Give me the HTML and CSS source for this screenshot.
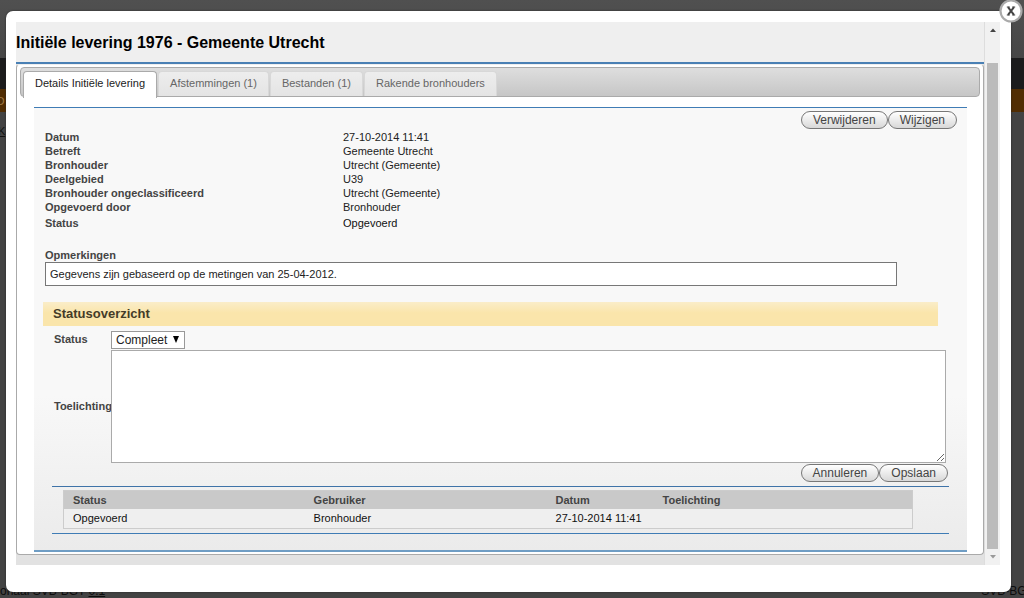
FILE: index.html
```html
<!DOCTYPE html>
<html lang="nl">
<head>
<meta charset="utf-8">
<title>Initiële levering 1976 - Gemeente Utrecht</title>
<link rel="stylesheet" href="styles.css">
</head>
<body>
<div class="backdrop">
  <div class="site-bar"></div>
  <div class="site-menu">O</div>
  <div class="site-crumb">K</div>
  <div class="site-footer"><span>onaal SVB-BGT <u>0.1</u></span><span>SVB-BGT</span></div>
</div>
<div class="modal">
  <button class="close" type="button" aria-label="Sluiten">
    <svg width="24" height="24" viewBox="0 0 24 24">
      <circle cx="12" cy="12" r="10.5" fill="#fff" stroke="#aaa" stroke-width="2.2"/>
      <path d="M9 8.2 L15 15.8 M15 8.2 L9 15.8" stroke="#444" stroke-width="2" fill="none"/>
      <path d="M7.8 8h3M13.2 8h3M7.8 16h3M13.2 16h3" stroke="#444" stroke-width="1"/>
    </svg>
  </button>
  <div class="frame">
    <main class="content">
      <h1>Initiële levering 1976 - Gemeente Utrecht</h1>
      <section class="tabs">
        <nav class="tab-bar">
          <button type="button" class="tab active">Details Initiële levering</button>
          <button type="button" class="tab">Afstemmingen (1)</button>
          <button type="button" class="tab">Bestanden (1)</button>
          <button type="button" class="tab">Rakende bronhouders</button>
        </nav>
        <div class="panel">
          <div class="actions top">
            <button type="button" class="pill">Verwijderen</button><button type="button" class="pill">Wijzigen</button>
          </div>
          <dl class="details">
            <dt>Datum</dt><dd>27-10-2014 11:41</dd>
            <dt>Betreft</dt><dd>Gemeente Utrecht</dd>
            <dt>Bronhouder</dt><dd>Utrecht (Gemeente)</dd>
            <dt>Deelgebied</dt><dd>U39</dd>
            <dt>Bronhouder ongeclassificeerd</dt><dd>Utrecht (Gemeente)</dd>
            <dt>Opgevoerd door</dt><dd>Bronhouder</dd>
            <dt class="last">Status</dt><dd class="last">Opgevoerd</dd>
          </dl>
          <div class="remarks">
            <label for="remarks">Opmerkingen</label>
            <input id="remarks" type="text" value="Gegevens zijn gebaseerd op de metingen van 25-04-2012." readonly>
          </div>
          <h2>Statusoverzicht</h2>
          <form class="status-form">
            <label for="status">Status</label>
            <div class="select-wrap">
              <select id="status"><option>Compleet</option></select>
              <svg width="6" height="7" viewBox="0 0 6 7"><path d="M0 0h6L3 7z"/></svg>
            </div>
            <label for="note">Toelichting</label>
            <textarea id="note"></textarea>
          </form>
          <div class="actions bottom">
            <button type="button" class="pill">Annuleren</button><button type="button" class="pill">Opslaan</button>
          </div>
          <div class="history">
            <table>
              <colgroup><col class="c-status"><col class="c-user"><col class="c-date"><col></colgroup>
              <thead><tr><th>Status</th><th>Gebruiker</th><th>Datum</th><th>Toelichting</th></tr></thead>
              <tbody><tr><td>Opgevoerd</td><td>Bronhouder</td><td>27-10-2014 11:41</td><td></td></tr></tbody>
            </table>
          </div>
        </div>
      </section>
    </main>
    <div class="scroll">
      <svg width="8" height="4" viewBox="0 0 8 4"><path d="M1 4L4 0.5L7 4z" fill="#444"/></svg>
      <div class="thumb"></div>
      <svg width="8" height="4" viewBox="0 0 8 4"><path d="M1 0L4 3.5L7 0z" fill="#999"/></svg>
    </div>
  </div>
</div>
</body>
</html>
```
FILE: styles.css
```css
* { box-sizing: border-box; }
body {
  margin: 0;
  min-height: 100vh;
  padding: 11px 13px 6px 6px;
  display: flex;
  background: #434343;
  font: 11px/14px "Liberation Sans", Arial, sans-serif;
  color: #222;
  overflow: hidden;
}
button, input, select, textarea { font: inherit; color: inherit; margin: 0; }

.backdrop { position: absolute; inset: 0; padding-top: 58px; display: flex; flex-direction: column; background: linear-gradient(#505050, #464646 60px, #434343 120px); overflow: hidden; }
.site-bar { height: 31px; background: #1b1b1c; }
.site-menu { height: 23px; background: #512d03; color: #a07a45; line-height: 24px; text-indent: -4px; }
.site-crumb { padding-top: 12px; text-decoration: underline; color: #111; text-indent: -2px; }
.site-footer { margin-top: auto; height: 14px; display: flex; justify-content: space-between; font-size: 12px; color: #0c0c0c; }
.site-footer span:last-child { margin-right: -10px; }

.modal { position: relative; flex: 1; padding: 11px 11px 27px 10px; display: flex; background: #fff; border-radius: 7px; box-shadow: 0 0 2px #222; }
.close { position: absolute; top: -12px; right: -12px; width: 24px; height: 24px; padding: 0; border: 0; background: none; border-radius: 50%; }
.close svg { display: block; }
.frame { flex: 1; display: flex; background: #e2e2e2; }
.content { flex: 1; min-width: 0; }
h1 { margin: 0; height: 42px; padding-top: 11px; font-size: 16px; line-height: 20px; color: #000; background: #efefef; border-bottom: 2px solid #4a80b4; }

.tabs { padding: 2px 3px; background: #fff; border: 1px solid #aaa; border-top-color: #eee; border-radius: 4px; }
.tab-bar { height: 30px; padding: 3px 0 0 2px; display: flex; gap: 1px; border: 1px solid #aaa; border-radius: 4px; background: linear-gradient(#dedede, #c6c6c6); }
.tab { height: 25px; padding: 0 11px 2px; border: 1px solid #d8d8d8; border-bottom: 0; border-radius: 4px 4px 0 0; background: linear-gradient(#ededed, #e4e4e4); color: #666; white-space: nowrap; }
.tab.active { height: 27px; padding-bottom: 4px; background: #fff; border-color: #aaa; color: #222; }

.panel { margin: 10px 13px 0 14px; padding: 3px 10px 16px; background: linear-gradient(#f8f8f8 65%, #ebebeb); border-top: 1px solid #3f7cb5; border-bottom: 2px solid #6f9dc4; }
.actions { display: flex; justify-content: flex-end; }
.pill { height: 18px; padding: 0 11px; border: 1px solid #777; border-radius: 9px; background: linear-gradient(#fff, #d8d8d8); color: #444; font-size: 12px; line-height: 16px; }

.details { margin: 1px 0 0; display: grid; grid-template-columns: 298px 1fr; padding-left: 1px; line-height: 14px; }
.details dt { font-weight: bold; color: #444; }
.details dd { margin: 0; }
.details .last { padding-top: 2px; }
.details dd.last { color: #111; }
.remarks { margin: 18px 60px 0 1px; }
.remarks label { display: block; font-weight: bold; color: #444; }
.remarks input { display: block; width: 100%; height: 24px; padding: 0 4px; border: 1px solid #777; border-radius: 0; background: #fff; }
h2 { margin: 16px 19px 0 -1px; padding-left: 10px; font-size: 13px; line-height: 24px; color: #443c28; background: linear-gradient(#faedc9, #fae5ab 45%, #fae5ab); }

.status-form { margin: 5px 11px 0 10px; display: grid; grid-template-columns: 57px 1fr; row-gap: 1px; align-items: center; }
.status-form label { padding-bottom: 2px; font-weight: bold; color: #444; }
.select-wrap { position: relative; justify-self: start; }
.select-wrap select { display: block; width: 74px; height: 18px; padding: 0 4px; appearance: none; border: 1px solid #999; border-radius: 0; background: #fff; font-size: 12px; color: #222; }
.select-wrap svg { position: absolute; right: 6px; top: 5px; pointer-events: none; }
textarea { display: block; width: 100%; height: 113px; border: 1px solid #aaa; border-radius: 0; background: #fff; resize: both; }
.bottom { margin: 1px 9px 0 0; }

.history { margin: 4px 8px 0; padding: 3px 36px 4px 11px; border-top: 1px solid #3f73a8; border-bottom: 1px solid #3f7cb5; }
.history table { width: 100%; table-layout: fixed; border-collapse: collapse; border: 1px solid #ccc; background: #efefef; color: #111; }
.history th { height: 18px; padding: 0 9px; background: #c9c9c9; color: #444; text-align: left; }
.history td { height: 20px; padding: 0 9px; }
.c-status { width: 28.4%; }
.c-user { width: 28.5%; }
.c-date { width: 12.6%; }
.history td:nth-child(3) { padding-right: 0; }

.scroll { width: 16px; padding: 6px 2px; display: flex; flex-direction: column; align-items: center; background: #f1f1f1; border-left: 1px solid #ddd; }
.thumb { flex: 1; align-self: stretch; margin: 31px 0 6px; background: #bbb; }
```
